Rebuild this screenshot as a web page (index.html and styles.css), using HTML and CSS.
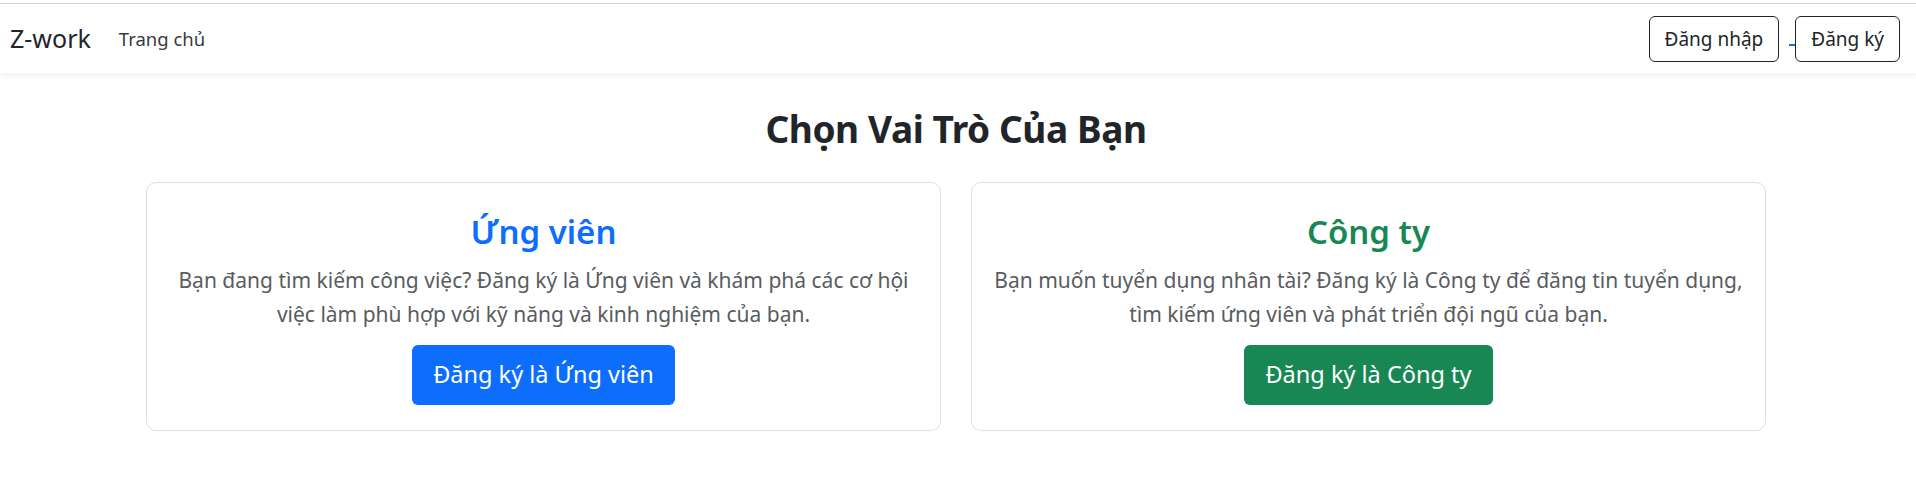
FILE: index.html
```html
<!DOCTYPE html>
<html lang="vi">
<head>
<meta charset="utf-8">
<title>Z-work - Chọn vai trò</title>
<link rel="stylesheet" href="styles.css">
</head>
<body>
<div class="topline"></div>
<nav class="navbar">
  <div class="nav-left">
    <a class="brand" href="#">Z-work</a>
    <a class="nav-link" href="#">Trang chủ</a>
  </div>
  <div class="nav-right">
    <a class="btn-outline" href="#">Đăng nhập</a>
    <span class="link-gap"></span>
    <a class="btn-outline" href="#">Đăng ký</a>
  </div>
</nav>
<main class="container">
  <h2 class="page-title">Chọn Vai Trò Của Bạn</h2>
  <div class="role-grid">
    <section class="card">
      <h3 class="card-title title-blue">Ứng viên</h3>
      <p class="card-text">Bạn đang tìm kiếm công việc? Đăng ký là Ứng viên và khám phá các cơ hội việc làm phù hợp với kỹ năng và kinh nghiệm của bạn.</p>
      <a class="btn-lg btn-blue" href="#">Đăng ký là Ứng viên</a>
    </section>
    <section class="card">
      <h3 class="card-title title-green">Công ty</h3>
      <p class="card-text">Bạn muốn tuyển dụng nhân tài? Đăng ký là Công ty để đăng tin tuyển dụng, tìm kiếm ứng viên và phát triển đội ngũ của bạn.</p>
      <a class="btn-lg btn-green" href="#">Đăng ký là Công ty</a>
    </section>
  </div>
</main>
</body>
</html>
```
FILE: styles.css
```css
* { box-sizing: border-box; }
body {
  margin: 0;
  font-family: "Noto Sans", "Open Sans", sans-serif;
  color: #212529;
  background: #fff;
}
a { text-decoration: none; }
.topline {
  height: 4px;
  border-bottom: 1px solid #d4d4d4;
}
.navbar {
  height: 69px;
  display: flex;
  align-items: center;
  justify-content: space-between;
  padding: 0 16px 0 10px;
  background: #fff;
  box-shadow: 0 3px 6px rgba(0, 0, 0, 0.06);
  position: relative;
}
.nav-left { display: flex; align-items: center; }
.brand {
  font-size: 25px;
  color: #212529;
  margin-right: 18px;
  line-height: 1.5;
}
.nav-link {
  font-size: 18.5px;
  color: rgba(33, 37, 41, 0.92);
  padding: 10px;
}
.nav-right { display: flex; align-items: center; }
.btn-outline {
  display: inline-block;
  font-size: 19px;
  line-height: 30px;
  padding: 7px 15px;
  border: 1px solid #212529;
  border-radius: 6px;
  color: #212529;
}
.link-gap {
  width: 6px;
  height: 2px;
  background: #0d6efd;
  margin-left: 10px;
  align-self: flex-start;
  margin-top: 28px;
}
.container {
  max-width: 1650px;
  margin: 0 auto;
  padding: 0 17px 0 13px;
}
.page-title {
  text-align: center;
  font-size: 37px;
  font-weight: 700;
  letter-spacing: -0.4px;
  line-height: 1.2;
  margin: 34px 0 31px;
}
.role-grid {
  display: grid;
  grid-template-columns: 1fr 1fr;
  gap: 30px;
}
.card {
  border: 1px solid #dedede;
  border-radius: 10px;
  padding: 29px 20px 25px;
  text-align: center;
}
.card-title {
  font-size: 33px;
  font-weight: 600;
  line-height: 40px;
  margin: 0 0 11px;
}
.title-blue { color: #0d6efd; }
.title-green { color: #198754; }
.card-text {
  font-size: 21px;
  line-height: 34px;
  color: #595c60;
  margin: 0 0 14px;
}
.btn-lg {
  display: inline-block;
  font-size: 23.5px;
  line-height: 37.5px;
  padding: 10px 20px;
  border: 1px solid transparent;
  border-radius: 6px;
  color: #fff;
}
.btn-blue { background: #0d6efd; }
.btn-green { background: #198754; }
```
